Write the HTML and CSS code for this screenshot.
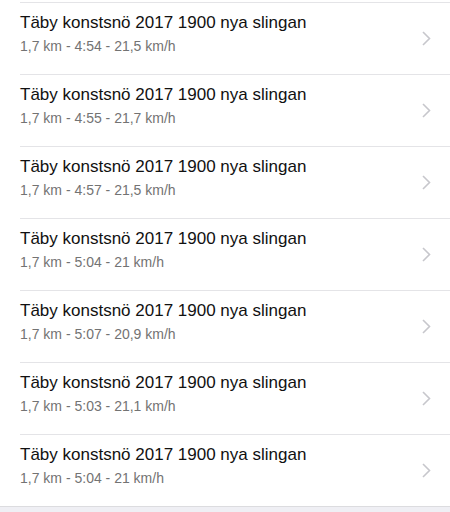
FILE: index.html
```html
<!DOCTYPE html>
<html lang="sv">
<head>
  <meta charset="UTF-8" />
  <title>Åk</title>
  <meta name="viewport" content="width=device-width, initial-scale=1" />
  <link rel="stylesheet" href="styles.css">
</head>
<body>
  <ul class="lista">
    <li class="rad">
      <div class="rad-text">
        <div class="titel">Täby konstsnö 2017 1900 nya slingan</div>
        <div class="info">1,7 km - 4:54 - 21,5 km/h</div>
      </div>
      <svg class="pil" width="9" height="15" viewBox="0 0 9 15"><polyline points="1,1 7.5,7.5 1,14" /></svg>
    </li>
    <li class="rad">
      <div class="rad-text">
        <div class="titel">Täby konstsnö 2017 1900 nya slingan</div>
        <div class="info">1,7 km - 4:55 - 21,7 km/h</div>
      </div>
      <svg class="pil" width="9" height="15" viewBox="0 0 9 15"><polyline points="1,1 7.5,7.5 1,14" /></svg>
    </li>
    <li class="rad">
      <div class="rad-text">
        <div class="titel">Täby konstsnö 2017 1900 nya slingan</div>
        <div class="info">1,7 km - 4:57 - 21,5 km/h</div>
      </div>
      <svg class="pil" width="9" height="15" viewBox="0 0 9 15"><polyline points="1,1 7.5,7.5 1,14" /></svg>
    </li>
    <li class="rad">
      <div class="rad-text">
        <div class="titel">Täby konstsnö 2017 1900 nya slingan</div>
        <div class="info">1,7 km - 5:04 - 21 km/h</div>
      </div>
      <svg class="pil" width="9" height="15" viewBox="0 0 9 15"><polyline points="1,1 7.5,7.5 1,14" /></svg>
    </li>
    <li class="rad">
      <div class="rad-text">
        <div class="titel">Täby konstsnö 2017 1900 nya slingan</div>
        <div class="info">1,7 km - 5:07 - 20,9 km/h</div>
      </div>
      <svg class="pil" width="9" height="15" viewBox="0 0 9 15"><polyline points="1,1 7.5,7.5 1,14" /></svg>
    </li>
    <li class="rad">
      <div class="rad-text">
        <div class="titel">Täby konstsnö 2017 1900 nya slingan</div>
        <div class="info">1,7 km - 5:03 - 21,1 km/h</div>
      </div>
      <svg class="pil" width="9" height="15" viewBox="0 0 9 15"><polyline points="1,1 7.5,7.5 1,14" /></svg>
    </li>
    <li class="rad">
      <div class="rad-text">
        <div class="titel">Täby konstsnö 2017 1900 nya slingan</div>
        <div class="info">1,7 km - 5:04 - 21 km/h</div>
      </div>
      <svg class="pil" width="9" height="15" viewBox="0 0 9 15"><polyline points="1,1 7.5,7.5 1,14" /></svg>
    </li>
  </ul>
  <div class="fot"></div>
</body>
</html>
```
FILE: styles.css
```css
body {
  margin: 0;
  background: #efeff4;
  font-family: "Liberation Sans", Arial, sans-serif;
  color: #111;
}

.lista {
  list-style: none;
  margin: 0;
  padding: 2px 0 0 20px;
  background: white;
  border-bottom: 1px solid #dcdcdf;
}

.rad {
  display: flex;
  align-items: center;
  height: 71px;
  border-top: 1px solid #e4e4e7;
  padding-right: 18px;
}

.rad-text {
  flex: 1;
  padding-bottom: 10px;
}

.titel {
  font-size: 17px;
  line-height: 20px;
  color: #111;
}

.info {
  font-size: 14px;
  line-height: 16px;
  margin-top: 5px;
  color: #737373;
}

/* pil till höger */
.pil {
  fill: none;
  stroke: #c7c7cc;
  stroke-width: 1.6;
  margin-right: 1px;
}

.fot {
  height: 10px;
}
```
